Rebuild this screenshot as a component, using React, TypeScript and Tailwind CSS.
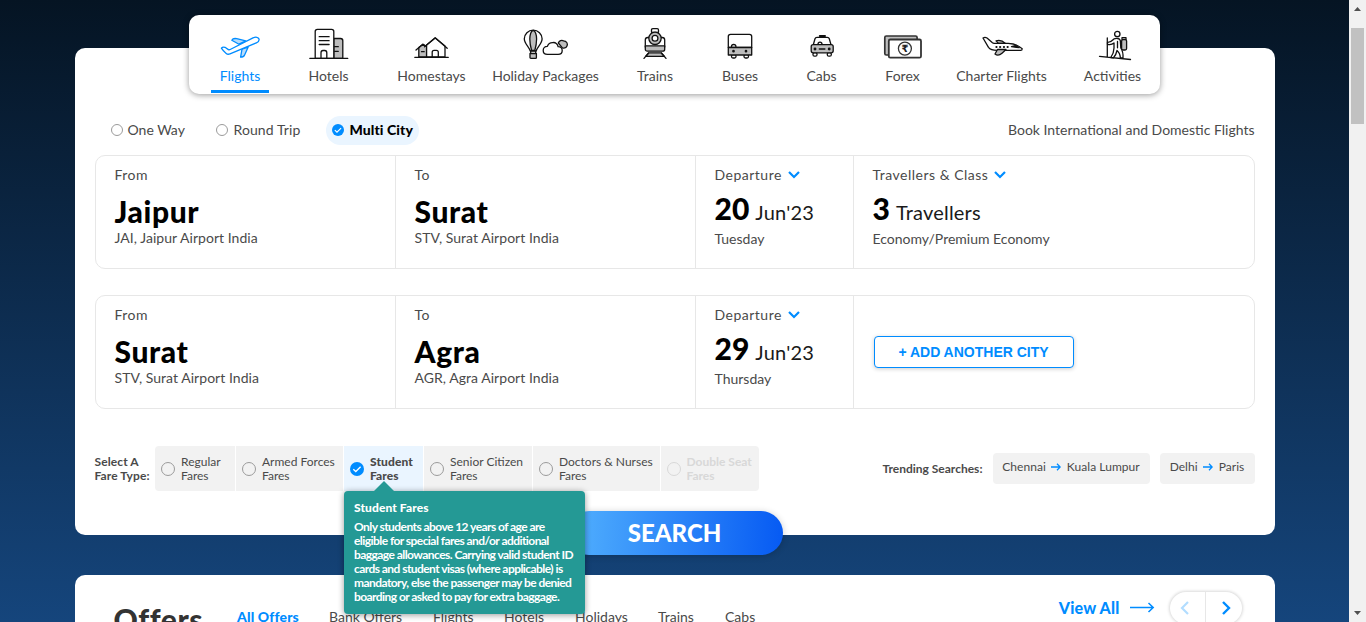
import React from "react";

type IconProps = { children: React.ReactNode; color?: string };

function NavIcon({ children, color = "#111111" }: IconProps) {
  return (
    <svg
      width="48"
      height="34"
      viewBox="0 0 48 34"
      fill="none"
      stroke={color}
      strokeWidth="1.3"
      strokeLinecap="round"
      strokeLinejoin="round"
      className="shrink-0"
    >
      {children}
    </svg>
  );
}

const GREY = "#bdbdbd";

const flightIcon = (
  <NavIcon color="#008cff">
    <path d="M23 17.2 15.8 13.3c.8-1.6 3-2 5-1.6l9 2.2z" fill="#b8dcfb" />
    <path d="M32.3 19.8 28.6 28c-.6 1.4-2 2.2-4 2.2l1.4-8z" fill="#b8dcfb" />
    <path
      d="M5.4 21.2c.8-1.1 2.2-1.3 3.6-.9l3.4 2.3c.6.2 1.2.2 1.8-.1L37 10.900c2.700-1.200 5.400-.8 6 1.1.4 1.600-.7 3-2.600 3.800L14 26.900c-1.500.6-2.700.5-3.800-.4-2-1.600-3.600-3.400-4.800-5.300z"
      fill="#fff"
    />
  </NavIcon>
);

const hotelIcon = (
  <NavIcon>
    <path d="M28.800 31.300V11.500h6.800c1.500 0 2.200.8 2.200 2.200v17.600z" fill={GREY} />
    <path d="M10.200 31.300V4.500c0-1.400.8-2.200 2.200-2.200h14.200c1.400 0 2.200.8 2.200 2.200v26.800z" fill="#fff" />
    <path d="M4.800 31.300h38M14.200 9.700h9.900M14.200 13.700h9.900M14.200 17.500h9.900M29.500 19.700h3.800M29.500 24.300h3.800" />
    <path d="M16 31v-5.200c0-1.500.8-2.300 2-2.300h1.800c1.200 0 2 .8 2 2.300V31" />
  </NavIcon>
);

const homeIcon = (
  <NavIcon>
    <path d="M10.800 30V20.600l4.200-3.300 3.600 2.500V30z" fill={GREY} />
    <path d="M18.600 30V17.900l8.600-7 9.800 8.200V30z" fill="#fff" />
    <path d="M6.800 30.300h33.500M8 23l6.900-5.800 2.300 1.500M16.500 19.800l10.700-9 12 10.500M13.500 24.700h2.700" />
    <path d="M24.200 30v-4.700c0-1.300.7-2 1.900-2h2.300c1.200 0 1.900.7 1.900 2V30" />
  </NavIcon>
);

const holidayIcon = (
  <NavIcon>
    <path d="M8.200 24C7.500 20 2.300 17 2.300 11.800 2.300 7 6.300 3.200 11.200 3.200s8.900 3.800 8.900 8.600c0 5.200-5.200 8.200-5.900 12.200z" fill="#fff" />
    <path d="M9.600 23.500C8.300 19 7.800 15.500 7.800 12c0-4 1.300-8.500 3.400-8.500s3.400 4.500 3.400 8.500c0 3.500-.5 7-1.800 11.500z" fill={GREY} />
    <path d="M8 26.500h6.400v4c0 .5-.4.900-.9.900H8.900c-.5 0-.9-.4-.9-.9zM8.700 24v2M13.700 24v2" fill={GREY} />
    <path d="M36.300 16c1-2.300 3.300-3.200 5.300-2.200 2.900.1 4.400 2.800 3.500 5-.7 2-2.600 2.600-4.700 2.100z" fill={GREY} />
    <path d="M25.500 27.300c-2.600 0-4.300-1.700-4.300-3.900 0-2.500 1.800-4.200 4.200-4.100 1-2.600 2.800-3.800 5.300-3.700 2.800-.5 5 1.300 5.400 4 2.500-.1 4.100 1.600 4.100 3.800 0 2.300-1.700 3.900-4.100 3.900z" fill="#fff" />
  </NavIcon>
);

const trainIcon = (
  <NavIcon>
    <path d="M14.300 20V13c0-1.600.9-2.500 2.500-2.500h14.400c1.600 0 2.500.9 2.500 2.500v7z" fill="#fff" />
    <path d="M14.300 18.800h19.400v3.400c0 1.200-.8 2-2 2H16.300c-1.200 0-2-.8-2-2z" fill={GREY} />
    <path d="M20.500 5.300V3c0-.8.5-1.300 1.300-1.300h4.400c.8 0 1.300.5 1.300 1.300v2.300z" fill="#fff" />
    <circle cx="24" cy="11.300" r="6.200" fill={GREY} />
    <circle cx="24" cy="11.300" r="2.900" fill="#fff" />
    <path d="M18 25.800h12l3.200 3.500H14.800z" fill={GREY} />
    <path d="M17.500 26 13 31.400M30.500 26l4.500 5.400" />
  </NavIcon>
);

const busIcon = (
  <NavIcon>
    <rect x="15.500" y="27.500" width="4.500" height="3.500" rx="1.500" fill="#fff" />
    <rect x="28" y="27.500" width="4.500" height="3.500" rx="1.500" fill="#fff" />
    <path d="M12.300 20.500V9.500c0-1.400.8-2.200 2.200-2.200h19c1.400 0 2.200.8 2.200 2.200v11z" fill="#fff" />
    <path d="M15.500 20.500v-1c0-1.400 1-2 2.200-2s2.200.6 2.200 2v1" />
    <path d="M12.300 20.500h23.400V28H12.300z" fill={GREY} />
    <circle cx="17.500" cy="24.200" r=".7" fill="#111" />
    <circle cx="30" cy="24.200" r=".7" fill="#111" />
  </NavIcon>
);

const cabIcon = (
  <NavIcon>
    <rect x="15" y="25.500" width="4" height="3.700" rx="1.500" fill="#fff" />
    <rect x="29.300" y="25.500" width="4" height="3.700" rx="1.500" fill="#fff" />
    <path d="m15.300 17.800 1.700-6c.3-1 .9-1.500 2-1.500h10.300c1.100 0 1.700.5 2 1.500l1.700 6z" fill="#fff" />
    <path d="M21.800 9h5.200" strokeWidth="2" />
    <path d="M20 17.300c0-1.500 1-2.200 2-2.200s2 .7 2 2.200" />
    <rect x="13.200" y="17.600" width="22" height="8.200" rx="2" fill={GREY} />
    <path d="M21.300 22h5.600" />
    <circle cx="17" cy="22" r=".8" fill="#111" />
    <circle cx="31.200" cy="22" r=".8" fill="#111" />
  </NavIcon>
);

const forexIcon = (
  <NavIcon color="#333333">
    <rect x="5.800" y="9" width="32.300" height="19" rx="1.500" fill={GREY} strokeWidth="1.700" />
    <rect x="9.800" y="12.500" width="32.200" height="18.200" rx="1.500" fill="#fff" strokeWidth="1.800" />
    <circle cx="25.900" cy="21.600" r="6.500" />
    <text
      x="25.900"
      y="25.300"
      textAnchor="middle"
      fill="#222"
      stroke="none"
      className="font-['DejaVu_Sans',sans-serif] text-[10px] font-bold"
    >
      ₹
    </text>
  </NavIcon>
);

const charterIcon = (
  <NavIcon>
    <path d="M18 13.900c3-1 7 .2 9.500 2.500h-7z" fill={GREY} />
    <path
      d="M5 11c1.300-.7 2.700-.7 4 0l5.200 4.600c.6.500 1.300.7 2 .7h14c5 0 9.500 1.700 14 5.400 0 1-.6 1.600-1.600 1.600H19c-4 0-7-1-8.500-3z"
      fill="#fff"
    />
    <path d="M19.500 22.500 17 27c2 1.600 5 1 7-.8l4-3.700z" fill={GREY} />
    <path d="M18.300 20h.3M22 20h.3M25.800 20h.3M29.500 20h.3" strokeWidth="1.900" />
    <path d="m33.500 19.700 3.700-1 4 2z" fill="#111" />
  </NavIcon>
);

const activityIcon = (
  <NavIcon>
    <rect x="32.600" y="12.500" width="5" height="10.500" rx="1.500" fill={GREY} />
    <path d="M33 12v-1.300h4V12" />
    <circle cx="28.300" cy="7" r="2.700" fill="#fff" />
    <path d="M25 11.900c2.500-1 5.500-.6 6.300 1.600l.5 7.500c2 3 2.500 6 2.200 10h-2.700c0-3-1-5.500-3.300-7.500-.6 3-1.800 5.500-3.500 7.300l-2.700-.3c2-3 3.200-6 3.200-9.500v-5c-2 1.700-4.200 1.900-6.500 1.300v-2c3 .3 4.500-1.500 6.500-3.400z" fill="#fff" />
    <path d="M28.500 14.500v6.300M18.300 11v18.800M10.500 29.400 41.500 32.500" />
  </NavIcon>
);

const navItems = [
  { label: "Flights", icon: flightIcon, width: "w-[88px]", active: true },
  { label: "Hotels", icon: hotelIcon, width: "w-[89px]" },
  { label: "Homestays", icon: homeIcon, width: "w-[117px]" },
  { label: "Holiday Packages", icon: holidayIcon, width: "w-[111px]" },
  { label: "Trains", icon: trainIcon, width: "w-[108px]" },
  { label: "Buses", icon: busIcon, width: "w-[62px]" },
  { label: "Cabs", icon: cabIcon, width: "w-[101px]" },
  { label: "Forex", icon: forexIcon, width: "w-[61px]" },
  { label: "Charter Flights", icon: charterIcon, width: "w-[137px]" },
  { label: "Activities", icon: activityIcon, width: "w-[85px]" },
];

function NavBar() {
  return (
    <nav className="relative z-10 mx-auto flex h-[79px] w-[971px] shrink-0 rounded-[10px] bg-white pl-[7px] shadow-[0_1px_6px_0_rgba(0,0,0,0.4)]">
      {navItems.map((item) => (
        <div key={item.label} className={`flex flex-col items-center pt-3 ${item.width}`}>
          {item.icon}
          <span
            className={`mt-[6px] text-[14px] leading-[18px] whitespace-nowrap ${
              item.active ? "text-[#008cff]" : "text-[#4a4a4a]"
            }`}
          >
            {item.label}
          </span>
          {item.active && <span className="mt-[5px] h-[3px] w-[58px] bg-[#008cff]" />}
        </div>
      ))}
    </nav>
  );
}

function CheckCircle({ size }: { size: number }) {
  return (
    <svg width={size} height={size} viewBox="0 0 14 14" className="shrink-0">
      <circle cx="7" cy="7" r="7" fill="#008cff" />
      <path d="m3.300 7.200 2.500 2.300 4.800-4.700" fill="none" stroke="#fff" strokeWidth="1.300" />
    </svg>
  );
}

function Chevron() {
  return (
    <svg width="12" height="8" viewBox="0 0 12 8" fill="none" stroke="#008cff" strokeWidth="2.200">
      <path d="m1 1 5 5 5-5" />
    </svg>
  );
}

function TripTypes() {
  return (
    <div className="flex h-7 items-center text-[14px] leading-[18px] text-[#4a4a4a]">
      <div className="flex w-[105px] items-center gap-[5px]">
        <span className="size-3 rounded-full border border-[#9b9b9b]" />
        One Way
      </div>
      <div className="flex w-[110px] items-center gap-[6px] tracking-[0.1px]">
        <span className="size-3 rounded-full border border-[#9b9b9b]" />
        Round Trip
      </div>
      <div className="flex h-[29px] w-[93px] items-center gap-[6px] rounded-full bg-[#eaf5ff] pl-[6px] font-black tracking-[0.1px] whitespace-nowrap text-black">
        <CheckCircle size={12} />
        Multi City
      </div>
      <p className="ml-auto">Book International and Domestic Flights</p>
    </div>
  );
}

function CityCell({ label, city, airport }: { label: string; city: string; airport: string }) {
  return (
    <div className="w-[300px] border-r border-[#e7e7e7] pt-[10px] pl-[19px]">
      <p className="text-[14px] leading-[18px] tracking-[0.5px]">{label}</p>
      <p className="mt-[9px] text-[30px] leading-9 font-black tracking-[0.6px] text-black">{city}</p>
      <p className="text-[14px] leading-[18px] tracking-[0.04px]">{airport}</p>
    </div>
  );
}

function ValueCell(props: {
  label: string;
  value: string;
  unit: string;
  note: string;
  className: string;
}) {
  return (
    <div className={`pt-[10px] pl-[19px] ${props.className}`}>
      <p className="flex items-center gap-[6px] text-[14px] leading-[18px] tracking-[0.5px]">
        {props.label}
        <Chevron />
      </p>
      <p className="mt-[6px] flex items-baseline gap-[6px] text-[20px] leading-9 text-[#1a1a1a]">
        <span className="text-[30px] font-black text-black">{props.value}</span>
        <span className="tracking-[0.2px]">{props.unit}</span>
      </p>
      <p className="text-[14px] leading-[18px]">{props.note}</p>
    </div>
  );
}

const rowClass = "flex h-[114px] rounded-[10px] border border-[#e7e7e7] text-[#4a4a4a]";

const fares = [
  { lines: ["Regular", "Fares"], width: "w-20" },
  { lines: ["Armed Forces", "Fares"], width: "w-[107px]" },
  { lines: ["Student", "Fares"], width: "w-[79px]", state: "on" },
  { lines: ["Senior Citizen", "Fares"], width: "w-[108px]" },
  { lines: ["Doctors & Nurses", "Fares"], width: "w-[127px]" },
  { lines: ["Double Seat", "Fares"], width: "w-[98px]", state: "off" },
];

function StudentTooltip() {
  return (
    <div className="absolute top-[45px] left-0 z-20 h-[123px] w-[241px] rounded-[4px] bg-[#249995] pt-[10px] pl-[10.5px] text-[12px] leading-[14px] font-bold text-white shadow-[0_1px_6px_0_rgba(0,0,0,0.4)]">
      <svg width="20" height="10" viewBox="0 0 20 10" className="absolute -top-[10px] left-[30px]">
        <path d="M0 10 10 0l10 10z" fill="#249995" />
      </svg>
      <p className="font-black tracking-[0.1px]">Student Fares</p>
      <p className="mt-[5px] tracking-[-0.56px] whitespace-nowrap">
        Only students above 12 years of age are
        <br />
        eligible for special fares and/or additional
        <br />
        baggage allowances. Carrying valid student ID
        <br />
        cards and student visas (where applicable) is
        <br />
        mandatory, else the passenger may be denied
        <br />
        boarding or asked to pay for extra baggage.
      </p>
    </div>
  );
}

function FareRow() {
  return (
    <div className="mt-[37px] flex h-[45px] items-center text-[12px] leading-[14px] text-[#4a4a4a]">
      <p className="w-[60px] font-bold tracking-[0.1px] whitespace-nowrap">
        Select A<br />
        Fare Type:
      </p>
      <div className="flex h-full gap-px">
        {fares.map((fare, i) => {
          const tone =
            fare.state === "on"
              ? "bg-[#eaf5ff] font-black tracking-[0.1px]"
              : fare.state === "off"
                ? "bg-[#f2f2f2] text-[#d8d8d8] font-bold"
                : "bg-[#f2f2f2]";
          const corner = i === 0 ? "rounded-l-[4px]" : i === fares.length - 1 ? "rounded-r-[4px]" : "";
          return (
            <div
              key={fare.lines[0]}
              className={`relative flex items-center gap-[6px] pl-[6px] whitespace-nowrap ${fare.width} ${tone} ${corner}`}
            >
              {fare.state === "on" ? (
                <CheckCircle size={14} />
              ) : (
                <span
                  className={`size-[14px] shrink-0 rounded-full border ${
                    fare.state === "off" ? "border-[#d8d8d8]" : "border-[#9b9b9b]"
                  }`}
                />
              )}
              <span className={fare.state === "off" ? "" : "pl-[0.5px]"}>
                {fare.lines[0]}
                <br />
                {fare.lines[1]}
              </span>
              {fare.state === "on" && <StudentTooltip />}
            </div>
          );
        })}
      </div>
      <div className="ml-auto flex items-center gap-[10px]">
        <span className="font-bold">Trending Searches:</span>
        <Route from="Chennai" to="Kuala Lumpur" width="w-[157px]" />
        <Route from="Delhi" to="Paris" width="w-[95px]" />
      </div>
    </div>
  );
}

function Route({ from, to, width }: { from: string; to: string; width: string }) {
  return (
    <span
      className={`flex h-[31px] items-center justify-center gap-[5.5px] rounded-[4px] bg-[#f2f2f2] pb-[3px] tracking-[0.05px] whitespace-nowrap ${width}`}
    >
      {from}
      <svg width="10" height="8" viewBox="0 0 10 8" fill="none" stroke="#008cff" strokeWidth="1.300">
        <path d="M0 4h9M6 .8 9.200 4 6 7.200" />
      </svg>
      {to}
    </span>
  );
}

function Offers() {
  return (
    <section className="mx-auto flex h-[100px] w-[1200px] shrink-0 items-start rounded-[10px] bg-white pl-[39px] text-[14px] leading-[18px] text-[#4a4a4a]">
      <h2 className="mt-[26px] w-[123.5px] text-[30px] leading-9 font-black tracking-[0.6px] text-[#333]">Offers</h2>
      <div className="mt-[33px] flex whitespace-nowrap">
        <span className="w-[92px] font-black tracking-[0.15px] text-[#008cff]">All Offers</span>
        <span className="w-[104px]">Bank Offers</span>
        <span className="w-[71px]">Flights</span>
        <span className="w-[71px]">Hotels</span>
        <span className="w-[83px]">Holidays</span>
        <span className="w-[67px]">Trains</span>
        <span>Cabs</span>
      </div>
      <div className="mt-[15px] mr-[33px] ml-auto flex h-[35px] items-center">
        <span className="text-[16px] font-black tracking-[0.2px] text-[#008cff]">View All</span>
        <svg width="25" height="11" viewBox="0 0 25 11" fill="none" stroke="#008cff" strokeWidth="1.500" className="mr-[15px] ml-[10px]">
          <path d="M0 5.500h23M18.500 1 23.200 5.500 18.500 10" />
        </svg>
        <div className="flex h-8 w-[72px] items-center rounded-full bg-white shadow-[0_0_3px_1px_rgba(0,0,0,0.15)]">
          <span className="flex h-full w-9 items-center justify-center border-r border-[#e7e7e7] pr-[5px]">
            <svg width="9" height="14" viewBox="0 0 9 14" fill="none" stroke="#b2ddff" strokeWidth="2.200">
              <path d="M8 1 2 7l6 6" />
            </svg>
          </span>
          <span className="flex h-full flex-1 items-center justify-center pl-[5px]">
            <svg width="9" height="14" viewBox="0 0 9 14" fill="none" stroke="#008cff" strokeWidth="2.400">
              <path d="m1 1 6 6-6 6" />
            </svg>
          </span>
        </div>
      </div>
    </section>
  );
}

function Scrollbar() {
  return (
    <div className="flex w-[17px] shrink-0 flex-col items-center bg-[#f1f1f1]">
      <svg width="17" height="17" viewBox="0 0 17 17">
        <path d="M5 11h7L8.500 7z" fill="#505050" />
      </svg>
      <div className="mt-[11px] h-24 w-[13px] bg-[#c1c1c1]" />
      <svg width="17" height="17" viewBox="0 0 17 17" className="mt-auto">
        <path d="M5 6h7l-3.500 4z" fill="#505050" />
      </svg>
    </div>
  );
}

export default function App() {
  return (
    <div className="flex h-[622px] w-[1366px] overflow-hidden font-['Lato',sans-serif]">
      <main className="flex flex-1 flex-col bg-[linear-gradient(0deg,#15457c,#051423)] pt-[15px]">
        <NavBar />
        <section className="mx-auto -mt-[46px] h-[487px] w-[1200px] shrink-0 rounded-[10px] bg-white px-5 pt-[68px]">
          <div className="pl-4">
            <TripTypes />
          </div>
          <div className={`mt-[11px] ${rowClass}`}>
            <CityCell label="From" city="Jaipur" airport="JAI, Jaipur Airport India" />
            <CityCell label="To" city="Surat" airport="STV, Surat Airport India" />
            <ValueCell
              label="Departure"
              value="20"
              unit="Jun'23"
              note="Tuesday"
              className="w-[158px] border-r border-[#e7e7e7]"
            />
            <ValueCell
              label="Travellers & Class"
              value="3"
              unit="Travellers"
              note="Economy/Premium Economy"
              className="flex-1"
            />
          </div>
          <div className={`mt-[26px] ${rowClass}`}>
            <CityCell label="From" city="Surat" airport="STV, Surat Airport India" />
            <CityCell label="To" city="Agra" airport="AGR, Agra Airport India" />
            <ValueCell
              label="Departure"
              value="29"
              unit="Jun'23"
              note="Thursday"
              className="w-[158px] border-r border-[#e7e7e7]"
            />
            <div className="flex flex-1 items-center pl-5">
              <button className="h-8 w-[200px] rounded-[4px] border border-[#008cff] bg-white font-['Liberation_Sans',Arial,sans-serif] text-[14px] font-bold text-[#008cff] shadow-[0_1px_4px_0_rgba(0,0,0,0.2)]">
                + ADD ANOTHER CITY
              </button>
            </div>
          </div>
          <FareRow />
          <div className="mt-5 flex justify-center">
            <button className="h-11 w-[216px] rounded-full bg-[linear-gradient(93deg,#53b2fe,#065af3)] text-[24px] font-black text-white shadow-[0_1px_7px_0_rgba(0,0,0,0.2)]">
              SEARCH
            </button>
          </div>
        </section>
        <div className="h-10 shrink-0" />
        <Offers />
      </main>
      <Scrollbar />
    </div>
  );
}
